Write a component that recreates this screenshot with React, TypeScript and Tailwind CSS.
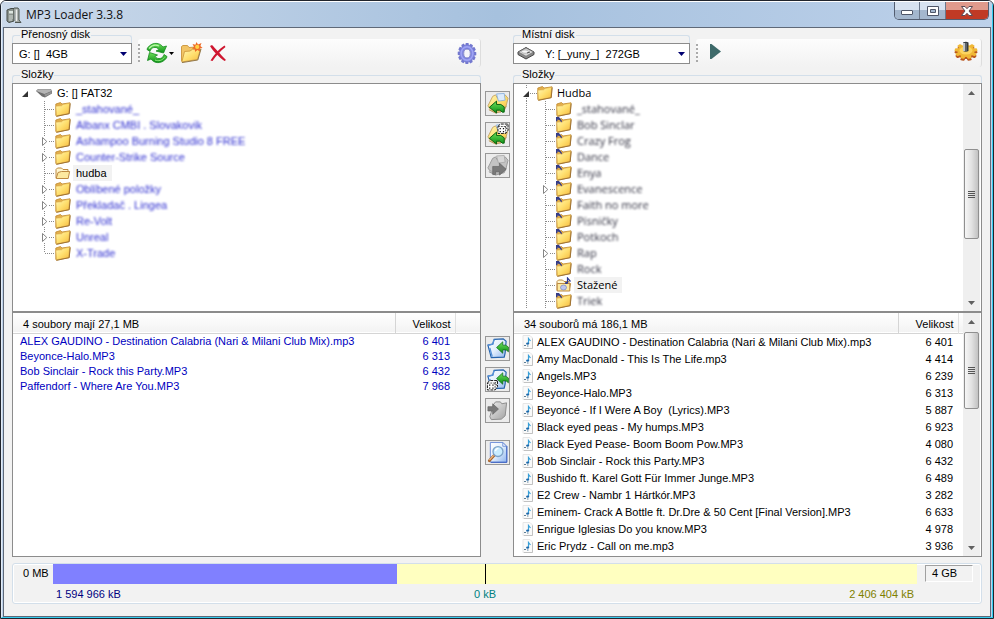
import React, { useState } from "react";

type Folder = { name: string; expandable?: boolean; selected?: boolean; hidden?: boolean; note?: boolean };
type Song = { name: string; size: string };

const portableFolders: Folder[] = [
    { name: "_stahované_", hidden: true },
    { name: "Albanx CMBI . Slovakovik", hidden: true },
    { name: "Ashampoo Burning Studio 8 FREE", hidden: true, expandable: true },
    { name: "Counter-Strike Source", hidden: true, expandable: true },
    { name: "hudba", selected: true },
    { name: "Oblíbené položky", hidden: true, expandable: true },
    { name: "Překladač . Lingea", hidden: true, expandable: true },
    { name: "Re-Volt", hidden: true, expandable: true },
    { name: "Unreal", hidden: true, expandable: true },
    { name: "X-Trade", hidden: true },
];

const localFolders: Folder[] = [
    { name: "_stahované_", hidden: true },
    { name: "Bob Sinclar", hidden: true, note: true },
    { name: "Crazy Frog", hidden: true, note: true },
    { name: "Dance", hidden: true, note: true },
    { name: "Enya", hidden: true, note: true },
    { name: "Evanescence", hidden: true, note: true, expandable: true },
    { name: "Faith no more", hidden: true, note: true },
    { name: "Písničky", hidden: true, note: true },
    { name: "Potkoch", hidden: true, note: true },
    { name: "Rap", hidden: true, note: true, expandable: true },
    { name: "Rock", hidden: true, note: true },
    { name: "Stažené", selected: true },
    { name: "Triek", hidden: true, note: true },
];

const portableSongs: Song[] = [
    { name: "ALEX GAUDINO - Destination Calabria (Nari & Milani Club Mix).mp3", size: "6 401" },
    { name: "Beyonce-Halo.MP3", size: "6 313" },
    { name: "Bob Sinclair - Rock this Party.MP3", size: "6 432" },
    { name: "Paffendorf - Where Are You.MP3", size: "7 968" },
];

const localSongs: Song[] = [
    { name: "ALEX GAUDINO - Destination Calabria (Nari & Milani Club Mix).mp3", size: "6 401" },
    { name: "Amy MacDonald - This Is The Life.mp3", size: "4 414" },
    { name: "Angels.MP3", size: "6 239" },
    { name: "Beyonce-Halo.MP3", size: "6 313" },
    { name: "Beyoncé - If I Were A Boy  (Lyrics).MP3", size: "5 887" },
    { name: "Black eyed peas - My humps.MP3", size: "6 923" },
    { name: "Black Eyed Pease- Boom Boom Pow.MP3", size: "4 080" },
    { name: "Bob Sinclair - Rock this Party.MP3", size: "6 432" },
    { name: "Bushido ft. Karel Gott Für Immer Junge.MP3", size: "6 489" },
    { name: "E2 Crew - Nambr 1 Hártkór.MP3", size: "3 282" },
    { name: "Eminem- Crack A Bottle ft. Dr.Dre & 50 Cent [Final Version].MP3", size: "6 633" },
    { name: "Enrigue Iglesias Do you know.MP3", size: "4 978" },
    { name: "Eric Prydz - Call on me.mp3", size: "3 936" },
];

/* Gradients shared by all of the icons */
function IconDefs() {
    return (
        <svg className="absolute h-0 w-0" aria-hidden="true">
            <defs>
                <linearGradient id="folder" x1="0" y1="0" x2="1" y2="1">
                    <stop offset="0" stopColor="#fff6b8" />
                    <stop offset="0.5" stopColor="#ffe070" />
                    <stop offset="1" stopColor="#f5b93c" />
                </linearGradient>
                <linearGradient id="green" x1="0" y1="0" x2="0" y2="1">
                    <stop offset="0" stopColor="#6fe05a" />
                    <stop offset="1" stopColor="#0a8f16" />
                </linearGradient>
                <linearGradient id="steel" x1="0" y1="0" x2="1" y2="1">
                    <stop offset="0" stopColor="#ededed" />
                    <stop offset="1" stopColor="#a2a2a2" />
                </linearGradient>
                <linearGradient id="paper" x1="0" y1="0" x2="1" y2="1">
                    <stop offset="0" stopColor="#ffffff" />
                    <stop offset="0.5" stopColor="#e2eefc" />
                    <stop offset="1" stopColor="#8db4ee" />
                </linearGradient>
            </defs>
        </svg>
    );
}

function FolderIcon({ note }: { note?: boolean }) {
    return (
        <svg viewBox="0 0 16 16" className="h-4 w-4 shrink-0">
            <path d="M0.8 14.5 V3 L5.5 1.5 L7 3 L15 1.8 L14.2 12.5 L1.5 15.2 Z" fill="#e2ae4c" stroke="#c08a30" strokeWidth="0.8" />
            <path d="M0.9 5.2 L6.5 4.8 L8 3.4 L14.7 2.3 L13.6 12.6 L1.5 14.7 Z" fill="url(#folder)" stroke="#d9a945" strokeWidth="0.5" />
            <path d="M1.5 15.3 L14.2 12.7 L15.2 2.5" fill="none" stroke="#9a6e33" strokeWidth="0.9" />
            {note && <path d="M0 0 L3 0 L6 4 L5.4 5.6 L3.5 3 L1.5 2.6 L1.3 4 L0 4.4 Z" fill="#343c88" />}
        </svg>
    );
}

function OpenFolderIcon({ note }: { note?: boolean }) {
    return (
        <svg viewBox="0 0 16 16" className="h-4 w-4 shrink-0">
            <path d="M1 13 V4.5 L2.5 3 H6.5 L8 4.5 H13 V7" fill="#fff6cf" stroke="#bd8a42" />
            <path d="M1.2 13.5 L3 7.5 L6.5 6.5 H14.6 L13.2 13.5 Z" fill="#fde9a0" stroke="#bd8a42" />
            {note && (
                <>
                    <path d="M1.2 6.5 H13.8 V14 H1.2 Z" fill="#fde9a0" stroke="#bd8a42" />
                    <ellipse cx="7.5" cy="10.5" rx="3" ry="2.5" fill="#bdc6ee" stroke="#6975bd" strokeWidth="0.6" />
                    <path d="M11.5 6 V1 L14.5 4.5" fill="none" stroke="#2b3790" strokeWidth="1.2" />
                    <ellipse cx="10.4" cy="6" rx="1.6" ry="1.1" fill="#2b3790" />
                </>
            )}
        </svg>
    );
}

function FlashDriveIcon() {
    return (
        <svg viewBox="0 0 16 16" className="h-4 w-4 shrink-0">
            <path d="M0 6 L2 4 L15 4 L16 6.5 V8.5 L9 12.5 L6 11.5 Z" fill="#6e6e6e" />
            <path d="M0.3 6 L2.5 4.2 L14.6 4.2 L15.6 6 L8.5 9 Z" fill="#b5b5b5" />
            <path d="M8.5 9.4 L15.6 6.6 V8.2 L9 11.8 Z" fill="#959595" />
        </svg>
    );
}

function HardDiskIcon() {
    return (
        <svg viewBox="0 0 18 14" className="h-[14px] w-[18px]">
            <path d="M1 6 L9 1.5 L17 6 V8.5 L9 13 L1 8.5 Z" fill="#8a8a8a" stroke="#444" />
            <path d="M1.5 6 L9 2 L16.5 6 L9 10.2 Z" fill="#dddddd" stroke="#666" strokeWidth="0.6" />
            <ellipse cx="8" cy="5.6" rx="3.4" ry="1.7" fill="#f5f5f5" stroke="#999" strokeWidth="0.6" />
            <path d="M10 7 L13 6" stroke="#555" />
        </svg>
    );
}

function AppIcon() {
    return (
        <svg viewBox="0 0 16 18" className="h-[18px] w-4">
            <path d="M1 4 L5 2.5 H8 V15 L3 16.5 L1 15 Z" fill="#8b938e" stroke="#444b47" />
            <path d="M3 5 H7 V7.5 H3 Z" fill="#dde6e0" />
            <path d="M3 10 H7 M3 12 H7 M3 14 H6" stroke="#d3dad6" />
            <path d="M8 2 H12 L13 3.5 V14 L15 16.5 H9" fill="#a2a8a4" stroke="#4f5652" />
            <path d="M10.5 3.5 V15" stroke="#eceeed" strokeWidth="1.4" />
        </svg>
    );
}

function RefreshIcon() {
    return (
        <svg viewBox="0 0 22 22" className="h-[22px] w-[22px]">
            <path d="M1.5 6 C4 2.5 7.5 1 11 1.4 C13.5 1.7 15.5 3 17 5 L20.5 4 L17.5 11 L10 9 L13 7.6 C11.5 5.6 9.5 5 7.5 5.6 C5.5 6.2 4.5 7.5 4 9.5 L1 7.5 Z" fill="url(#green)" stroke="#158a1e" strokeWidth="0.8" />
            <path d="M20.5 16 C18 19.5 14.5 21 11 20.6 C8.5 20.3 6.5 19 5 17 L1.5 18.5 L3.5 10.5 L11.5 13 L9 14.4 C10.5 16.4 12.5 17 14.5 16.4 C16.5 15.8 17.5 14.5 18 12.5 L21 14.5 Z" fill="url(#green)" stroke="#158a1e" strokeWidth="0.8" />
            <path d="M3 6.5 C5.5 3.5 9.5 2.4 13 4" fill="none" stroke="#b9f7a7" strokeWidth="1.2" />
            <path d="M18.5 15.5 C16 18.6 12.5 19.4 9 18" fill="none" stroke="#8de97b" />
        </svg>
    );
}

function NewFolderIcon() {
    return (
        <svg viewBox="0 0 23 22" className="h-[22px] w-[23px]">
            <path d="M1.5 19 V4.5 L3 3.5 L7.5 3.5 L9 5.5 L16 5 V10" fill="#f2c566" stroke="#cf9b46" />
            <path d="M1.8 20 L4.5 9.5 L10 9 L12.5 7.3 L20.5 7 L17.5 17.5 Z" fill="url(#folder)" stroke="#d3a244" />
            <path d="M2 20.6 L17.8 18 L21 7" fill="none" stroke="#94794b" />
            <path d="M16.5 0 L18 2.6 L21.5 1 L20.4 4 L22.6 6 L19.8 6.6 L20 9.5 L17.4 8 L15 10 L14.8 7 L12 6.5 L14 4.8 L12.5 2 L15.4 2.8 Z" fill="#ee6a25" />
            <circle cx="17.2" cy="4.9" r="2.1" fill="#ffcf45" />
        </svg>
    );
}

function DeleteIcon() {
    return (
        <svg viewBox="0 0 18 18" className="h-[18px] w-[18px]">
            <path d="M1 2 L3 1 C6 4 12 11 17 16 L15.5 17 C10 13 4 7 1 2 Z" fill="#cf1730" />
            <path d="M15.5 1.5 L16.5 3 C11 7 7 12 3.5 17 L1.5 16.5 C5 11 10 5 15.5 1.5 Z" fill="#cf1730" />
        </svg>
    );
}

const teeth = [0, 30, 60, 90, 120, 150, 180, 210, 240, 270, 300, 330];

function GearIcon() {
    return (
        <svg viewBox="0 0 20 24" className="h-[23px] w-5">
            <g transform="translate(10 12) scale(0.88 1)">
                {teeth.map((angle) => (
                    <path key={angle} d="M-2.6 -7 L-1.4 -11 H1.8 L2.6 -7 Z" fill="#7378cf" transform={`rotate(${angle})`} />
                ))}
                <circle r="6.4" fill="none" stroke="#8388e2" strokeWidth="4.4" />
                <circle r="7" fill="none" stroke="#a0a5f5" strokeWidth="1.6" />
                <ellipse rx="3.9" ry="4.6" fill="#f4f4fa" stroke="#5f64b8" strokeWidth="0.8" />
            </g>
        </svg>
    );
}

function OptionsIcon() {
    return (
        <svg viewBox="0 0 24 20" className="h-5 w-6">
            {[{ y: 12, color: "#b9571f" }, { y: 10, color: "#f0b836" }].map((layer) => (
                <g key={layer.y} transform={`translate(12 ${layer.y}) scale(1 0.7)`}>
                    {[0, 40, 80, 120, 160, 200, 240, 280, 320].map((angle) => (
                        <rect key={angle} x="-2.2" y="-11.4" width="4.4" height="6" rx="1" fill={layer.color} transform={`rotate(${angle})`} />
                    ))}
                    <circle r="8.6" fill={layer.color} />
                </g>
            ))}
            <ellipse cx="12" cy="9.5" rx="6.5" ry="4" fill="#fcd460" />
            <path d="M9 1.5 Q12 0 14.5 1.5 V10 Q12 11.5 9 10 Z" fill="#33383c" />
            <path d="M10 2 V10" stroke="#e8eaec" strokeWidth="1.6" />
            <path d="M12 2 V10.4" stroke="#8b9094" />
        </svg>
    );
}

function NoteFileIcon() {
    return (
        <svg viewBox="0 0 12 14" className="h-[14px] w-3 shrink-0">
            <path d="M1 0.5 H8 L10.5 3 V13.5 H1 Z" fill="#fafafa" stroke="#e6e6e6" />
            <path d="M10.5 3.5 V13.5 H2" fill="none" stroke="#c2c2c2" />
            <path d="M6.5 8.5 V3.5 L8.5 6" fill="none" stroke="#3aa0d8" strokeWidth="1.2" />
            <ellipse cx="5.6" cy="8.6" rx="1.5" ry="1.2" fill="#1c69ac" />
            <path d="M2 10.5 H4 M5 11 H6.5" stroke="#5d7f96" />
        </svg>
    );
}

type CopyIconProps = { kind: "folder" | "file"; dice?: boolean; disabled?: boolean };

function CopyIcon({ kind, dice, disabled }: CopyIconProps) {
    const arrow = disabled ? "#7a7a7a" : "url(#green)";
    const edge = disabled ? "#636363" : "#08600f";
    return (
        <svg viewBox="0 0 24 23" className="h-[23px] w-6">
            {kind === "folder" ? (
                <>
                    <path d="M2 14 L7 4 L10 2.5 L12 6 L20 2.5 L23 6 L20.5 16 L15 20.5 L4 17 Z" fill={disabled ? "#c3c3c3" : "url(#folder)"} stroke={disabled ? "#9a9a9a" : "#c8a766"} />
                    <path d="M3 18 L10 21.5 L19 19 L21 14" fill={disabled ? "#b4b4b4" : "#e9c77a"} stroke={disabled ? "#999999" : "#b6935a"} />
                    <path d="M11 1.5 L19 1 L20 8 L13 9 Z" fill={disabled ? "#d7d7d7" : "#dcebfc"} stroke={disabled ? "#a5a5a5" : "#7faad9"} strokeWidth="0.8" />
                    {disabled ? (
                        <path d="M7 12.5 H14 V9 L21 15.5 L14 21.5 V18 H10 V21 H7 Z" fill={arrow} stroke={edge} strokeWidth="0.7" />
                    ) : (
                        <path d="M3.5 15.5 L11 9 V12.5 H15.5 L19 15 V20.5 H17 L14.5 18.5 H11 V21.5 Z" fill={arrow} stroke={edge} />
                    )}
                </>
            ) : disabled ? (
                <>
                    <path d="M8 5 L10 2.5 H15 L16.5 4.5 L21.5 3.5 L20 17 L16 20.5 L5.5 21 L4 18 Z" fill="url(#steel)" stroke="#8b8b8b" />
                    <path d="M2 12 V7.5 H7 V4.5 L13 10 L7 15.5 V12 Z" fill={arrow} stroke={edge} strokeWidth="0.7" />
                </>
            ) : (
                <>
                    <path d="M2 8 L7 7 L8.5 2 L18 1.5 L21 4 L20 16 L19 20.5 L5.5 21 Z" fill="url(#paper)" stroke="#2563ad" strokeWidth="1.2" />
                    <path d="M2 8 L7 7 L8.5 2 M4 11 L6.5 20" fill="none" stroke="#5692da" strokeWidth="1.4" />
                    <path d="M11 10.5 L17.5 4.5 V8 H20.5 L23.4 10 V15 L21 13 H17.5 V16.5 Z" fill={arrow} stroke={edge} strokeWidth="0.7" />
                </>
            )}
            {dice && (
                <g transform={kind === "folder" ? "translate(12 0)" : "translate(1 12)"}>
                    <path d="M0.5 3 L3 0.6 H11 V7 L8.5 10.4 H0.5 Z" fill="#ffffff" stroke="#111111" strokeDasharray="3 1" />
                    <path d="M8.5 3.2 L11 0.6 M8.5 3.2 V10.4 M0.5 3.2 H8.5" fill="none" stroke="#222222" strokeWidth="0.8" strokeDasharray="2 1" />
                    <path d="M2.2 5.4 h1.3 M5.6 5.4 h1.3 M2.2 8.4 h1.3 M5.6 8.4 h1.3 M9.2 5 h1" stroke="#111111" strokeWidth="1.3" />
                </g>
            )}
        </svg>
    );
}

function SearchFileIcon() {
    return (
        <svg viewBox="0 0 24 23" className="h-[23px] w-6">
            <path d="M4.5 1 H17.5 L21.5 5 V21.5 H4.5 Z" fill="url(#paper)" stroke="#6a8bd8" />
            <path d="M17.5 1 V5 H21.5 Z" fill="#eef5ff" stroke="#5b7fd0" strokeWidth="0.8" />
            <path d="M21.8 5 V21.8 H5" fill="none" stroke="#3a5fc0" />
            <path d="M8.5 14.5 L3.5 20" stroke="#a8642c" strokeWidth="3" strokeLinecap="round" />
            <path d="M8 14.5 L3.5 19.4" stroke="#f0bc85" strokeWidth="1.2" />
            <circle cx="12.5" cy="10.5" r="5.2" fill="#c9ecff" stroke="#7ea3c9" strokeWidth="1.4" />
            <path d="M9.8 10 Q10.5 7.3 13 7.2" fill="none" stroke="#ffffff" strokeWidth="1.5" />
        </svg>
    );
}

/* Dotted branch lines left of a folder */
function Branch({ expandable, last, outer }: { expandable?: boolean; last?: boolean; outer?: boolean }) {
    return (
        <svg viewBox="0 0 42 16" className="h-4 w-[42px] shrink-0">
            {outer && <path d="M12.5 0 V16" stroke="#8a8a8a" strokeDasharray="1 1" />}
            <path d={last ? "M31.5 0 V8" : "M31.5 0 V16"} stroke="#8a8a8a" strokeDasharray="1 1" />
            <path d="M32 8.5 H42" stroke="#8a8a8a" strokeDasharray="1 1" />
            {expandable && (
                <>
                    <path d="M29 3 H36 V14 H29 Z" fill="#ffffff" />
                    <path d="M29.5 4.5 L33.8 8.5 L29.5 12.5 Z" fill="#ffffff" stroke="#858585" />
                </>
            )}
        </svg>
    );
}

type TreeProps = { root: string; icon: React.ReactNode; folders: Folder[]; local?: boolean };

function Tree({ root, icon, folders, local }: TreeProps) {
    return (
        <ul className="min-w-0 flex-1 overflow-hidden pt-px">
            <li>
                <div className="flex h-4 items-center">
                    <svg viewBox="0 0 23 16" className="h-4 w-[23px] shrink-0">
                        {local && <path d="M12.5 0 V4 M12.5 13 V16 M16 8.5 H23" stroke="#8a8a8a" strokeDasharray="1 1" />}
                        <path d="M15 6 V12 H9 Z" fill="#333333" />
                    </svg>
                    {icon}
                    <span className={local ? "pl-1 font-['Open_Sans',sans-serif]" : "pl-[5px]"}>{root}</span>
                </div>
                <ul>
                    {folders.map((folder, index) => (
                        <li key={folder.name} className="flex h-4 items-center">
                            <Branch expandable={folder.expandable} last={!local && index === folders.length - 1} outer={local} />
                            {folder.selected ? <OpenFolderIcon note={local} /> : <FolderIcon note={folder.note} />}
                            <button
                                className={`ml-[2px] h-4 whitespace-nowrap px-[3px] text-left leading-4 ${local ? "font-['Open_Sans',sans-serif]" : ""} ${folder.selected ? "bg-[#f2f2f2] pr-[5px]" : ""} ${folder.hidden ? (local ? "text-[#303040] blur-[1px]" : "text-[#3030d0] blur-[1px]") : ""}`}
                            >
                                {folder.name}
                            </button>
                        </li>
                    ))}
                </ul>
            </li>
        </ul>
    );
}

function Scrollbar({ thumb }: { thumb: string }) {
    return (
        <div className="flex w-[17px] shrink-0 flex-col items-center bg-[#efefef]">
            <svg viewBox="0 0 17 17" className="h-[17px] w-[17px] shrink-0"><path d="M5 11 L8.5 7 L12 11 Z" fill="#606060" /></svg>
            <div className={`flex w-[15px] flex-col items-center justify-center gap-px rounded-[2px] border border-[#8f8f8f] bg-linear-to-r from-[#f6f6f6] via-[#e2e2e2] to-[#c2c2c2] ${thumb}`}>
                <span className="h-px w-[7px] bg-[#555555]" />
                <span className="h-px w-[7px] bg-[#555555]" />
                <span className="h-px w-[7px] bg-[#555555]" />
                <span className="h-px w-[7px] bg-[#555555]" />
            </div>
            <svg viewBox="0 0 17 17" className="mt-auto h-[17px] w-[17px] shrink-0"><path d="M5 7 L8.5 11 L12 7 Z" fill="#606060" /></svg>
        </div>
    );
}

function SongTable({ title, songs, local }: { title: string; songs: Song[]; local?: boolean }) {
    return (
        <table className="w-full min-w-0 flex-1 table-fixed self-start">
            <colgroup>
                <col />
                <col className="w-[60px]" />
                <col className={local ? "w-[5px]" : "w-[25px]"} />
            </colgroup>
            <thead>
                <tr className="h-5 border-b border-[#d5d5d5] bg-linear-to-b from-white to-[#f3f3f3]">
                    <th className="border-r border-[#d5d5d5] pt-[2px] pl-[10px] text-left font-normal">{title}</th>
                    <th className="border-r border-[#e0e0e0] pt-[2px] pr-1 text-right font-normal">Velikost</th>
                    <th />
                </tr>
            </thead>
            <tbody className={local ? "" : "text-[#0000c0]"}>
                {songs.map((song) => (
                    <tr key={song.name} className={local ? "h-[17px]" : "h-[15px]"}>
                        <td className="overflow-hidden whitespace-pre">
                            <span className={local ? "flex items-center gap-[3px] pl-2" : "pl-[7px]"}>
                                {local && <NoteFileIcon />}
                                {song.name}
                            </span>
                        </td>
                        <td className="pr-[5px] text-right">{song.size}</td>
                        <td />
                    </tr>
                ))}
            </tbody>
        </table>
    );
}

type DriveSelectProps = { id: string; label: string; value: string; width: string; icon?: React.ReactNode };

function DriveSelect({ id, label, value, width, icon }: DriveSelectProps) {
    return (
        <div className={width}>
            <GroupLabel htmlFor={id}>{label}</GroupLabel>
            <div className="relative">
                <select id={id} defaultValue={value} className={`block h-[21px] w-full appearance-none border border-[#8c8c8c] bg-white ${icon ? "pl-[31px]" : "pl-[6px]"}`}>
                    <option>{value}</option>
                </select>
                <span className="pointer-events-none absolute top-[3px] left-1">{icon}</span>
                <svg viewBox="0 0 7 4" className="pointer-events-none absolute top-[9px] right-[5px] h-1 w-[7px]"><path d="M0 0 H7 L3.5 4 Z" fill="#000070" /></svg>
            </div>
        </div>
    );
}

function GroupLabel({ htmlFor, children }: { htmlFor?: string; children: React.ReactNode }) {
    return (
        <div className="flex h-[15px] items-start gap-px leading-[13px]">
            <span className="h-2 w-2 self-end rounded-tl-[3px] border-t border-l border-[#d3dfea]" />
            <label htmlFor={htmlFor}>{children}</label>
            <span className="h-2 flex-1 self-end rounded-tr-[3px] border-t border-r border-[#d3dfea]" />
        </div>
    );
}

function Grip() {
    return (
        <svg viewBox="0 0 2 18" className="h-[18px] w-[2px]"><path d="M1 0 V18" stroke="#aaaaaa" strokeWidth="2" strokeDasharray="2 2" /></svg>
    );
}

function CopyButton({ label, disabled, children }: { label: string; disabled?: boolean; children: React.ReactNode }) {
    return (
        <button aria-label={label} disabled={disabled} className="flex h-[25px] w-[25px] items-center justify-center border border-[#989898] bg-[#ececec]">
            {children}
        </button>
    );
}

function TitleBar() {
    return (
        <header className="flex h-[25px] items-center gap-1 bg-linear-to-r from-[#cbd9ea] via-[#a6c1de] to-[#bdd1ea] pl-1">
            <AppIcon />
            <h1 className="flex-1 font-['Open_Sans',sans-serif] text-[12px] text-[#111111]">MP3 Loader 3.3.8</h1>
            <div className="mr-[3px] flex h-[18px] self-start overflow-hidden rounded-b-[5px] border border-t-0 border-[#535d70]">
                <button aria-label="Minimize" className="flex w-[25px] items-center justify-center border-r border-[#6c788b] bg-linear-to-b from-[#d7e2f0] from-45% to-[#a4b7ce] to-50%">
                    <span className="mt-1 h-[5px] w-3 rounded-[1px] border border-[#4f5668] bg-white" />
                </button>
                <button aria-label="Maximize" className="flex w-[26px] items-center justify-center border-r border-[#6c788b] bg-linear-to-b from-[#d7e2f0] from-45% to-[#a4b7ce] to-50%">
                    <svg viewBox="0 0 12 10" className="h-[10px] w-3">
                        <path d="M0.5 0.5 H11.5 V9.5 H0.5 Z M3.5 3.5 H8.5 V6.5 H3.5 Z" fill="#ffffff" fillRule="evenodd" stroke="#4f5668" />
                    </svg>
                </button>
                <button aria-label="Close" className="flex w-[42px] items-center justify-center bg-linear-to-b from-[#e09a8c] from-45% to-[#c03a25] to-50%">
                    <svg viewBox="0 0 12 10" className="h-[10px] w-3">
                        <path d="M0.5 0.5 H4 L6 2.7 L8 0.5 H11.5 L8 5 L11.5 9.5 H8 L6 7.3 L4 9.5 H0.5 L4 5 Z" fill="#ffffff" stroke="#5b4a55" />
                    </svg>
                </button>
            </div>
        </header>
    );
}

function App() {
    const [used] = useState(1594966);
    const [free] = useState(2406404);
    const percent = (used / (used + free)) * 100;

    return (
        <div className="flex min-h-screen flex-col overflow-hidden rounded-t-[6px] border border-[#20242c] bg-[#bdd1ea] font-['Liberation_Sans',Arial,sans-serif] text-[11px] leading-[14px] text-black">
            <IconDefs />
            <div className="flex flex-1 flex-col border border-t-white border-r-[#35cdf0] border-b-[#35cdf0] border-l-[#e3ecf5]">
                <TitleBar />
                <main className="mx-px flex flex-1 flex-col border border-[#5f6978] bg-[#f2f2f2] pr-2 pb-3 pl-2">
                    <div className="flex flex-1">
                        {/* Portable drive */}
                        <section className="flex min-w-0 flex-1 flex-col">
                            <div className="flex h-10 items-start">
                                <DriveSelect id="portable" label="Přenosný disk" value={"G: []\u00a0 4GB"} width="w-[120px]" />
                                <div className="mt-[11px] ml-[6px] flex h-7 flex-1 items-center rounded-[3px] border-r border-[#dddddd] bg-linear-to-b from-[#fdfdfd] to-[#f2f2f2] pr-[3px]">
                                    <Grip />
                                    <button aria-label="Obnovit" className="ml-[6px] flex items-center gap-[1px]">
                                        <RefreshIcon />
                                        <svg viewBox="0 0 5 3" className="h-[3px] w-[5px]"><path d="M0 0 H5 L2.5 3 Z" /></svg>
                                    </button>
                                    <button aria-label="Nová složka" className="ml-[6px]"><NewFolderIcon /></button>
                                    <button aria-label="Smazat" className="ml-[6px]"><DeleteIcon /></button>
                                    <button aria-label="Nastavení" className="ml-auto"><GearIcon /></button>
                                </div>
                            </div>
                            <GroupLabel>Složky</GroupLabel>
                            <div className="flex h-[229px] border border-[#8c8c8c] bg-white">
                                <Tree root="G: [] FAT32" icon={<FlashDriveIcon />} folders={portableFolders} />
                            </div>
                            <div className="flex flex-1 border border-[#8c8c8c] bg-white">
                                <SongTable title="4 soubory mají 27,1 MB" songs={portableSongs} />
                            </div>
                        </section>

                        {/* Copy buttons between the two drives */}
                        <div className="flex w-8 shrink-0 flex-col items-start pt-[63px] pl-1">
                            <div className="flex h-[245px] flex-col gap-[6px]">
                                <CopyButton label="Kopírovat složku"><CopyIcon kind="folder" /></CopyButton>
                                <CopyButton label="Kopírovat náhodné složky"><CopyIcon kind="folder" dice /></CopyButton>
                                <CopyButton label="Kopírovat složku zpět" disabled><CopyIcon kind="folder" disabled /></CopyButton>
                            </div>
                            <div className="flex flex-col gap-[6px]">
                                <CopyButton label="Kopírovat soubory"><CopyIcon kind="file" /></CopyButton>
                                <CopyButton label="Kopírovat náhodné soubory"><CopyIcon kind="file" dice /></CopyButton>
                                <CopyButton label="Kopírovat soubory zpět" disabled><CopyIcon kind="file" disabled /></CopyButton>
                            </div>
                            <div className="mt-[17px]">
                                <CopyButton label="Hledat"><SearchFileIcon /></CopyButton>
                            </div>
                        </div>

                        {/* Local drive */}
                        <section className="flex min-w-0 flex-1 flex-col">
                            <div className="flex h-10 items-start">
                                <DriveSelect id="local" label="Místní disk" value={"Y: [_yuny_]\u00a0 272GB"} width="w-[177px]" icon={<HardDiskIcon />} />
                                <div className="mt-[11px] ml-[6px] flex h-7 flex-1 items-center rounded-[3px] border-r border-[#dddddd] bg-linear-to-b from-[#fdfdfd] to-[#f2f2f2] pr-[3px]">
                                    <Grip />
                                    <button aria-label="Přehrát" className="mb-1 ml-3">
                                        <svg viewBox="0 0 11 15" className="h-[15px] w-[11px]"><path d="M0 0 H1.5 L11 7.5 L1.5 15 H0 Z" fill="#3e6a6a" /></svg>
                                    </button>
                                    <button aria-label="Možnosti" className="mb-1 ml-auto"><OptionsIcon /></button>
                                </div>
                            </div>
                            <GroupLabel>Složky</GroupLabel>
                            <div className="flex h-[229px] border border-[#8c8c8c] bg-white pr-px">
                                <Tree root="Hudba" icon={<FolderIcon />} folders={localFolders} local />
                                <Scrollbar thumb="mt-12 h-[90px]" />
                            </div>
                            <div className="flex flex-1 border border-[#8c8c8c] bg-white pr-px">
                                <SongTable title="34 souborů má 186,1 MB" songs={localSongs} local />
                                <Scrollbar thumb="mt-[2px] h-[77px]" />
                            </div>
                        </section>
                    </div>

                    {/* Space used on the portable drive */}
                    <footer className="mt-[6px] flex h-[41px] rounded-[3px] border border-[#d3dfea] shadow-[inset_0_0_0_1px_#ffffff]">
                        <span className="w-10 pt-[2px] pl-[10px] whitespace-nowrap">0 MB</span>
                        <div className="flex-1">
                            <div className="relative h-5 bg-[#ffffc0]">
                                <div className="h-full bg-[#8080ff]" style={{ width: `${percent}%` }} />
                                <span className="absolute top-0 left-1/2 h-full w-px bg-black" />
                            </div>
                            <div className="grid grid-cols-3 px-[3px] pt-[3px]">
                                <span className="text-[#000080]">1 594 966 kB</span>
                                <span className="text-center text-[#008080]">0 kB</span>
                                <span className="text-right text-[#808000]">2 406 404 kB</span>
                            </div>
                        </div>
                        <span className="mx-2 mt-px h-[17px] w-12 border border-t-[#a0a0a0] border-r-white border-b-white border-l-[#a0a0a0] pl-[6px]">4 GB</span>
                    </footer>
                </main>
            </div>
        </div>
    );
}

export default App;
